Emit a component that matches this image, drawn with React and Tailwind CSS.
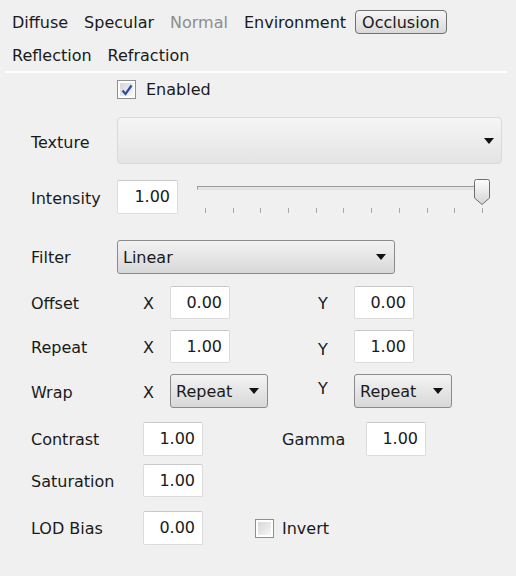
import React from "react";

const font = { fontFamily: '"DejaVu Sans", Verdana, sans-serif' };

function Tab({ label, active, disabled }) {
  if (active) {
    return (
      <div className="h-[24px] px-[6px] pt-[2px] flex items-center rounded-[4px] border border-[#707070] bg-gradient-to-b from-[#f6f6f6] to-[#d9d9d9]">
        {label}
      </div>
    );
  }
  return (
    <div className={"h-[24px] px-[7px] pt-[2px] flex items-center " + (disabled ? "text-[#8d8d8d]" : "")}>
      {label}
    </div>
  );
}

function NumBox({ value, w = "w-[61px]" }) {
  return (
    <div className={w + " h-full bg-white border border-[#dcdcdc] border-t-[#c9c9c9] rounded-[2px] flex items-center justify-end pr-[7px]"}>
      {value}
    </div>
  );
}

function Arrow() {
  return (
    <svg width="10" height="6" viewBox="0 0 10 6" className="shrink-0">
      <path d="M0 0 L10 0 L5 6 Z" fill="#111" />
    </svg>
  );
}

function Dropdown({ value, className }) {
  return (
    <div className={"h-full rounded-[3px] border border-[#8a8a8a] bg-gradient-to-b from-[#f3f3f3] to-[#d8d8d8] flex items-center justify-between pl-[5px] pr-[8px] " + className}>
      <span className="mt-[2px]">{value}</span>
      <Arrow />
    </div>
  );
}

function CheckBox({ checked }) {
  return (
    <div className="w-[19px] h-[19px] border border-[#8f8f8f] bg-white p-[2px]">
      <div className="w-full h-full bg-gradient-to-br from-[#d6d6d6] to-[#f7f7f7] flex items-center justify-center">
        {checked && (
          <svg width="12" height="12" viewBox="0 0 12 12">
            <path d="M1.5 6.5 L4.5 10 L10.5 1.5" fill="none" stroke="#2b4fa6" strokeWidth="2.2" />
          </svg>
        )}
      </div>
    </div>
  );
}

function Slider() {
  const ticks = Array.from({ length: 11 });
  return (
    <div className="relative w-[300px] h-[35px] ml-[19px] -mt-[1px]">
      <div className="absolute left-0 top-[7px] w-[290px] h-[4px] border border-[#9a9a9a] border-b-[#e0e0e0] bg-[#e6e6e6] rounded-[1px]" />
      <svg className="absolute left-[277px] top-0" width="16" height="26" viewBox="0 0 16 26">
        <defs>
          <linearGradient id="th" x1="0" y1="0" x2="0" y2="1">
            <stop offset="0" stopColor="#fdfdfd" />
            <stop offset="1" stopColor="#d4d4d4" />
          </linearGradient>
        </defs>
        <path d="M2.5 0.5 H13.5 Q15.5 0.5 15.5 2.5 V19 L8 25.5 L0.5 19 V2.5 Q0.5 0.5 2.5 0.5 Z" fill="url(#th)" stroke="#6e6e6e" />
      </svg>
      <div className="absolute left-[8px] top-[29px] w-[278px] flex justify-between">
        {ticks.map((_, i) => (
          <div key={i} className="w-px h-[5px] bg-[#a8a8a8]" />
        ))}
      </div>
    </div>
  );
}

export default function App() {
  return (
    <div className="w-[516px] h-[576px] bg-[#f0f0f0] text-[16px] text-[#1a1a1a]" style={font}>
      <div className="px-[5px] pt-[10px]">
        <div className="flex gap-[2px]">
          <Tab label="Diffuse" />
          <Tab label="Specular" />
          <Tab label="Normal" disabled />
          <Tab label="Environment" />
          <Tab label="Occlusion" active />
        </div>
        <div className="flex gap-[2px] mt-[9px]">
          <Tab label="Reflection" />
          <Tab label="Refraction" />
        </div>
        <div className="mt-[4px] h-[2px] w-[502px] bg-white" />
      </div>

      <div className="pl-[31px]">
        <div className="flex items-center h-[19px] mt-[7px] pl-[86px] gap-[10px]">
          <CheckBox checked />
          <span className="mt-[1px]">Enabled</span>
        </div>

        <div className="flex items-center h-[47px] mt-[18px]">
          <span className="w-[86px] mt-[4px]">Texture</span>
          <div className="w-[385px] h-full rounded-[4px] border border-[#d9d9d9] bg-gradient-to-b from-[#f5f5f5] to-[#e4e4e4] flex items-center justify-end pr-[7px]">
            <Arrow />
          </div>
        </div>

        <div className="flex items-start h-[34px] mt-[16px]">
          <span className="w-[86px] self-center mt-[3px]">Intensity</span>
          <NumBox value="1.00" />
          <Slider />
        </div>

        <div className="flex items-center h-[34px] mt-[26px]">
          <span className="w-[86px] mt-[1px]">Filter</span>
          <Dropdown value="Linear" className="w-[278px]" />
        </div>

        <div className="flex items-center h-[33px] mt-[12px]">
          <span className="w-[112px] mt-[2px]">Offset</span>
          <span className="w-[27px] mt-[2px]">X</span>
          <NumBox value="0.00" w="w-[60px]" />
          <span className="ml-[88px] w-[36px] mt-[2px]">Y</span>
          <NumBox value="0.00" w="w-[60px]" />
        </div>

        <div className="flex items-center h-[33px] mt-[11px]">
          <span className="w-[112px] mt-[2px]">Repeat</span>
          <span className="w-[27px] mt-[2px]">X</span>
          <NumBox value="1.00" w="w-[60px]" />
          <span className="ml-[88px] w-[36px] mt-[7px]">Y</span>
          <NumBox value="1.00" w="w-[60px]" />
        </div>

        <div className="flex items-center h-[34px] mt-[11px]">
          <span className="w-[112px] mt-[3px]">Wrap</span>
          <span className="w-[27px] mt-[3px]">X</span>
          <Dropdown value="Repeat" className="w-[98px]" />
          <span className="ml-[50px] w-[36px] -mt-[5px]">Y</span>
          <Dropdown value="Repeat" className="w-[98px]" />
        </div>

        <div className="flex items-center h-[34px] mt-[14px]">
          <span className="w-[112px] mt-[2px]">Contrast</span>
          <NumBox value="1.00" w="w-[60px]" />
          <span className="ml-[79px] w-[84px] mt-[2px]">Gamma</span>
          <NumBox value="1.00" w="w-[60px]" />
        </div>

        <div className="flex items-center h-[33px] mt-[8px]">
          <span className="w-[112px] mt-[2px]">Saturation</span>
          <NumBox value="1.00" w="w-[60px]" />
        </div>

        <div className="flex items-center h-[34px] mt-[14px]">
          <span className="w-[112px] mt-[2px]">LOD Bias</span>
          <NumBox value="0.00" w="w-[60px]" />
          <div className="ml-[52px] flex items-center gap-[8px]">
            <CheckBox />
            <span className="mt-[1px]">Invert</span>
          </div>
        </div>
      </div>
    </div>
  );
}
